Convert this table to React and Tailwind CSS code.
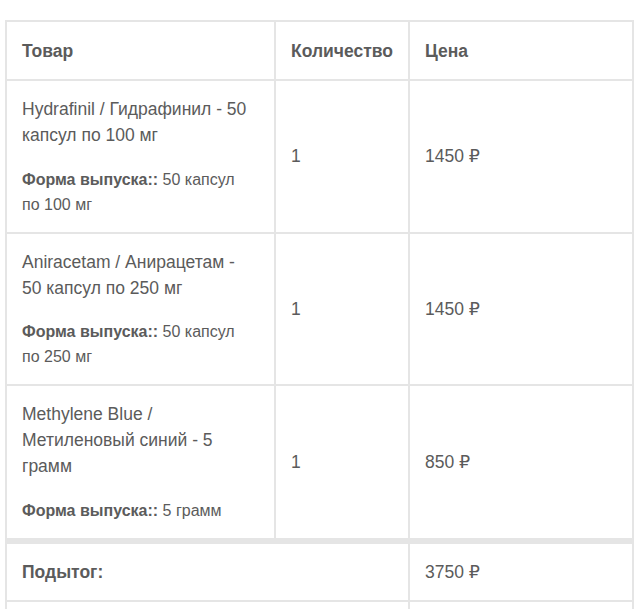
export default function App() {
  const rows = [
    { name: "Hydrafinil / Гидрафинил - 50 капсул по 100 мг", form: "50 капсул по 100 мг", qty: "1", price: "1450 ₽" },
    { name: "Aniracetam / Анирацетам - 50 капсул по 250 мг", form: "50 капсул по 250 мг", qty: "1", price: "1450 ₽" },
    { name: "Methylene Blue / Метиленовый синий - 5 грамм", form: "5 грамм", qty: "1", price: "850 ₽" },
  ];
  const cell = "border-2 border-[#e5e5e5] px-[15px] text-left align-middle";
  return (
    <div className="bg-white min-h-[609px] pt-[20px] pl-[5px] text-[#5b5b5b] text-[17.5px] leading-[26px]" style={{ fontFamily: '"Liberation Sans", Arial, "DejaVu Sans", sans-serif' }}>
      <table className="w-[627px] table-fixed border-collapse">
        <colgroup>
          <col className="w-[269px]" />
          <col className="w-[134px]" />
          <col className="w-[224px]" />
        </colgroup>
        <thead>
          <tr>
            <th className={`${cell} pt-[16px] pb-[15px] font-bold`}>Товар</th>
            <th className={`${cell} pt-[16px] pb-[15px] font-bold`}>Количество</th>
            <th className={`${cell} pt-[16px] pb-[15px] font-bold`}>Цена</th>
          </tr>
        </thead>
        <tbody>
          {rows.map((r, i) => (
            <tr key={i}>
              <td className={`${cell} py-[15px]`}>
                <div>{r.name}</div>
                <div className="mt-[18.5px] pr-[6px] text-[16px] leading-[25px]">
                  <span className="font-bold">Форма выпуска::</span> {r.form}
                </div>
              </td>
              <td className={`${cell} py-[15px]`}>{r.qty}</td>
              <td className={`${cell} py-[15px]`}>{r.price}</td>
            </tr>
          ))}
        </tbody>
        <tfoot>
          <tr>
            <th colSpan={2} className={`${cell} border-t-[6px] py-[15px] font-bold`}>Подытог:</th>
            <td className={`${cell} border-t-[6px] py-[15px]`}>3750 ₽</td>
          </tr>
          <tr>
            <th colSpan={2} className={`${cell} py-[15px] font-bold`}>Доставка:</th>
            <td className={`${cell} py-[15px]`}>Бесплатно</td>
          </tr>
        </tfoot>
      </table>
    </div>
  );
}
